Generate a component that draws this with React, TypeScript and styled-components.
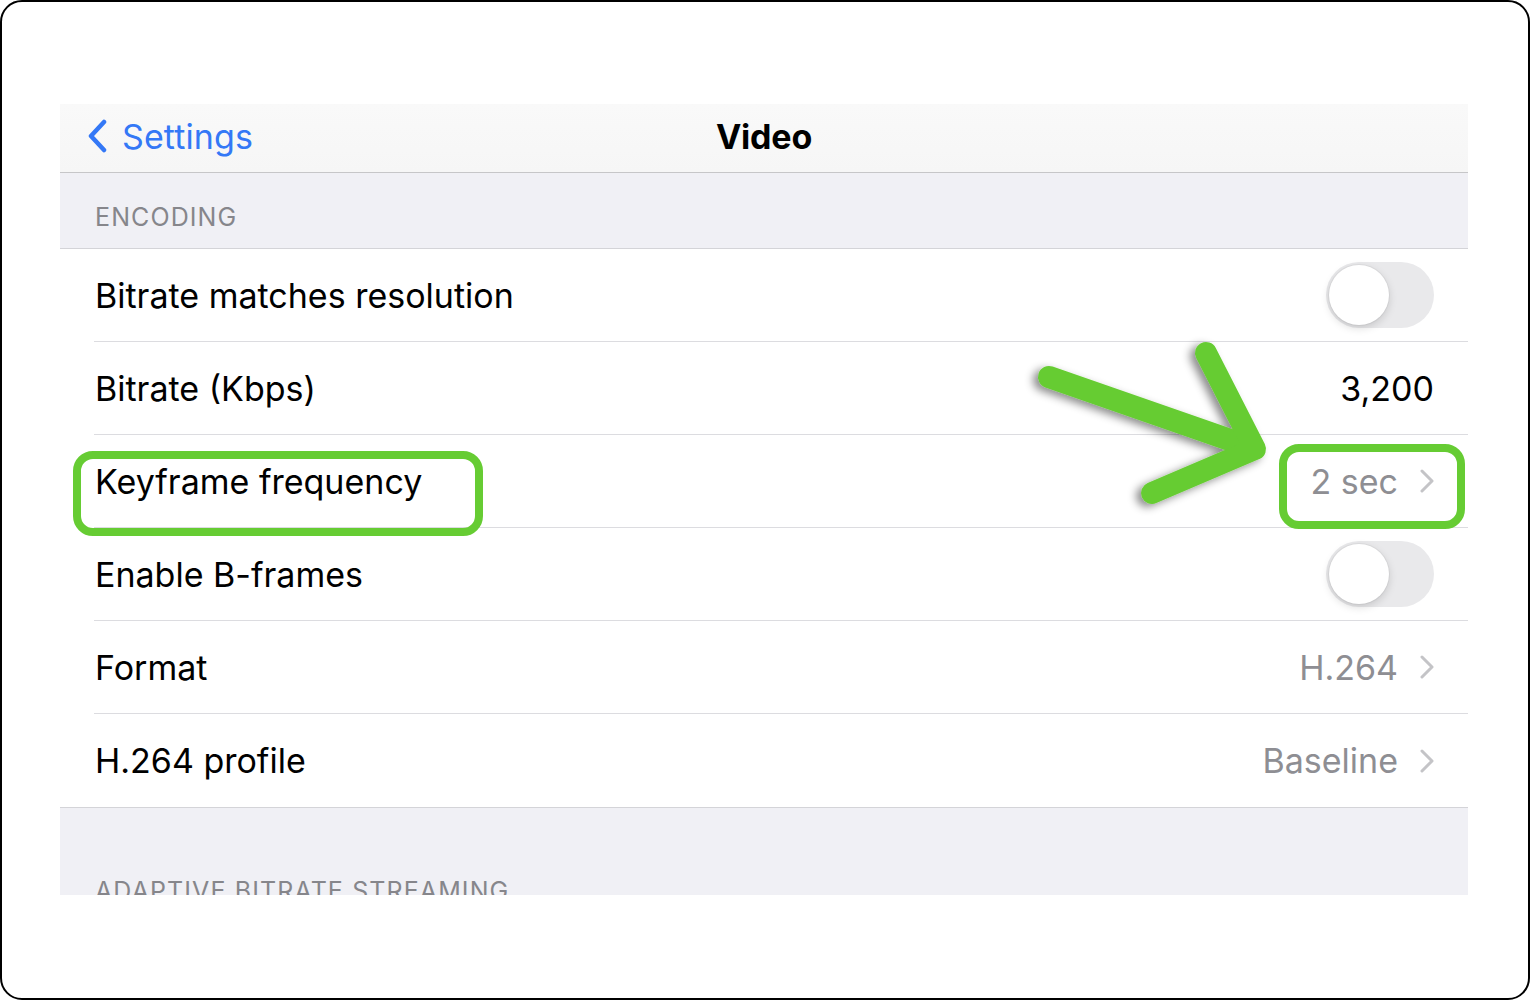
import React from "react";
import styled, { createGlobalStyle } from "styled-components";

const Global = createGlobalStyle`
  html, body { margin: 0; padding: 0; background: #fff; }
  body { font-family: Inter, "Noto Sans", sans-serif; -webkit-font-smoothing: antialiased; }
  * { box-sizing: border-box; }
`;

const Frame = styled.div`
  position: relative;
  width: 1530px;
  height: 1000px;
  border: 2px solid #000;
  border-radius: 22px;
  background: #fff;
  padding: 102px 0 0 58px;
  overflow: hidden;
`;

const Panel = styled.div`
  width: 1408px;
  height: 791px;
  overflow: hidden;
  background: #f0f0f5;
  display: flex;
  flex-direction: column;
`;

const NavBar = styled.div`
  height: 69px;
  flex: none;
  display: grid;
  grid-template-columns: 1fr auto 1fr;
  align-items: center;
  background: linear-gradient(180deg, #f9f9f9 0%, #f6f6f6 100%);
  border-bottom: 1px solid #c6c6c8;
  padding-bottom: 4px;
`;

const Back = styled.div`
  display: flex;
  align-items: center;
  gap: 15px;
  padding-left: 27px;
  color: #3478f6;
  font-size: 34px;
  letter-spacing: 0.1px;
`;

const Title = styled.div`
  font-size: 34px;
  font-weight: 700;
  color: #000;
  letter-spacing: -0.2px;
`;

const SectionHeader = styled.div<{ $h: number; $line?: boolean }>`
  height: ${(p) => p.$h}px;
  flex: none;
  display: flex;
  align-items: flex-end;
  padding: 0 0 16px 35px;
  font-size: 25px;
  color: #86868b;
  letter-spacing: 1.1px;
  border-bottom: ${(p) => (p.$line ? "1px solid #d4d4d8" : "none")};
`;

const Group = styled.div`
  background: #fff;
  border-bottom: 1px solid #d4d4d8;
  flex: none;
`;

const Row = styled.div<{ $last?: boolean }>`
  height: 93px;
  margin-left: 34px;
  padding: 0 34px 0 1px;
  display: flex;
  align-items: center;
  justify-content: space-between;
  border-bottom: ${(p) => (p.$last ? "none" : "1px solid #dcdce0")};
`;

const Label = styled.span`
  font-size: 34px;
  color: #000;
`;

const Value = styled.span<{ $dim?: boolean }>`
  display: flex;
  align-items: center;
  gap: 22px;
  font-size: 34px;
  color: ${(p) => (p.$dim ? "#8e8e93" : "#000")};
`;

const Toggle = styled.div`
  position: relative;
  width: 108px;
  height: 66px;
  border-radius: 33px;
  background: #e9e9eb;
  flex: none;
  &::after {
    content: "";
    position: absolute;
    left: 3px;
    top: 3px;
    width: 60px;
    height: 60px;
    border-radius: 50%;
    background: #fff;
    box-shadow: 0 3px 8px rgba(0, 0, 0, 0.15), 0 0 0 1px rgba(0, 0, 0, 0.04);
  }
`;

const Overlay = styled.svg`
  position: absolute;
  left: 0;
  top: 0;
  pointer-events: none;
`;

const Chevron = () => (
  <svg width="14" height="24" viewBox="0 0 14 24">
    <path d="M2 2 L12 12 L2 22" fill="none" stroke="#c4c4c7" strokeWidth="3" strokeLinecap="round" strokeLinejoin="round" />
  </svg>
);

const BackChevron = () => (
  <svg width="20" height="34" viewBox="0 0 20 34">
    <path d="M17 3 L4 17 L17 31" fill="none" stroke="#3478f6" strokeWidth="4.5" strokeLinecap="round" strokeLinejoin="round" />
  </svg>
);

export default function App() {
  return (
    <>
      <Global />
      <Frame>
        <Panel>
          <NavBar>
            <Back>
              <BackChevron />
              <span>Settings</span>
            </Back>
            <Title>Video</Title>
            <div />
          </NavBar>
          <SectionHeader $h={76} $line>ENCODING</SectionHeader>
          <Group>
            <Row>
              <Label>Bitrate matches resolution</Label>
              <Toggle />
            </Row>
            <Row>
              <Label>Bitrate (Kbps)</Label>
              <Value>3,200</Value>
            </Row>
            <Row>
              <Label>Keyframe frequency</Label>
              <Value $dim>
                2 sec <Chevron />
              </Value>
            </Row>
            <Row>
              <Label>Enable B-frames</Label>
              <Toggle />
            </Row>
            <Row>
              <Label>Format</Label>
              <Value $dim>
                H.264 <Chevron />
              </Value>
            </Row>
            <Row $last>
              <Label>H.264 profile</Label>
              <Value $dim>
                Baseline <Chevron />
              </Value>
            </Row>
          </Group>
          <SectionHeader $h={114}>ADAPTIVE BITRATE STREAMING</SectionHeader>
        </Panel>
        <Overlay width="1530" height="1000" viewBox="0 0 1530 1000">
          <defs>
            <filter id="sh" x="-20%" y="-20%" width="140%" height="140%">
              <feDropShadow dx="-5" dy="3" stdDeviation="4" floodColor="#000" floodOpacity="0.45" />
            </filter>
          </defs>
          <rect x="75" y="453" width="402" height="77" rx="16" fill="none" stroke="#66cc33" strokeWidth="8" />
          <rect x="1281" y="446" width="178" height="77" rx="16" fill="none" stroke="#66cc33" strokeWidth="8" />
          <g filter="url(#sh)" stroke="#66cc33" strokeWidth="22" strokeLinecap="round" strokeLinejoin="round" fill="none">
            <path d="M1047 375 L1251 446" />
            <path d="M1204 351 L1253 447 L1150 491" />
          </g>
        </Overlay>
      </Frame>
    </>
  );
}
